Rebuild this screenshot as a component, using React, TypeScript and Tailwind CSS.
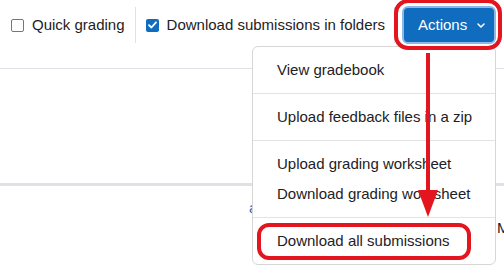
const menuGroups: string[][] = [
  ['View gradebook'],
  ['Upload feedback files in a zip'],
  ['Upload grading worksheet', 'Download grading worksheet'],
  ['Download all submissions'],
]

function Checkbox({ checked }: { checked?: boolean }) {
  if (checked) {
    return (
      <span className="flex h-[13px] w-[13px] items-center justify-center rounded-[2px] bg-[#0f6cbf]">
        <svg width="9" height="8" viewBox="0 0 9 8" fill="none">
          <path d="M1 4.2 3.4 6.5 8 1.3" stroke="white" strokeWidth="1.8" strokeLinecap="round" strokeLinejoin="round" />
        </svg>
      </span>
    )
  }
  return <span className="h-[13px] w-[13px] rounded-[2px] border border-[#767676] bg-white" />
}

export default function App() {
  return (
    <div className="relative h-[277px] w-[504px] overflow-hidden bg-white font-['Liberation_Sans',Arial,sans-serif] text-[15px] text-[#1d2125]">
      {/* top toolbar */}
      <div className="flex h-[50px] items-center pl-[11px]">
        <label className="flex items-center gap-[8px]">
          <Checkbox />
          <span>Quick grading</span>
        </label>
        <div className="ml-[10px] mr-[10px] h-[36px] w-px bg-[#dee2e6]" />
        <label className="flex items-center gap-[8px]">
          <Checkbox checked />
          <span>Download submissions in folders</span>
        </label>
        <div className="ml-[9px] mr-[7px] h-[36px] w-px bg-[#dee2e6]" />
        <button className="flex h-[38px] w-[94px] items-center rounded-[6px] border-2 border-[#8db8e6] bg-[#0f6cbf] pl-[14px] text-white">
          <span>Actions</span>
          <svg className="ml-[10px]" width="8" height="5" viewBox="0 0 8 5" fill="none">
            <path d="M1 1 4 4 7 1" stroke="white" strokeWidth="1.5" strokeLinecap="round" strokeLinejoin="round" />
          </svg>
        </button>
      </div>

      {/* table behind */}
      <div className="mt-[18px] h-px bg-[#dee2e6]" />
      <div className="h-[114px]" />
      <div className="h-[3px] bg-[#dee2e6]" />
      <div className="mt-[12px] h-[20px] pl-[249px] leading-[20px] text-[#0f6cbf]">a</div>
      <div className="h-[20px] pl-[497px] leading-[20px]">M</div>

      {/* actions dropdown menu */}
      <div className="absolute left-[252px] top-[46px] w-[244px] rounded-[6px] border border-[#d6d6d6] bg-white py-[8px]">
        {menuGroups.map((group, gi) => (
          <div key={gi}>
            {gi > 0 && <div className="my-[8px] h-px bg-[#e3e3e3]" />}
            {group.map(item => (
              <div key={item} className="flex h-[30px] items-center whitespace-nowrap pl-[24px]">
                {item}
              </div>
            ))}
          </div>
        ))}
      </div>

      {/* red annotations */}
      <div className="absolute left-[394px] top-[-1px] h-[51px] w-[108px] rounded-[14px] border-4 border-[#e3151f]" />
      <div className="absolute left-[257px] top-[223px] h-[37px] w-[214px] rounded-[12px] border-4 border-[#e3151f]" />
      <svg className="absolute left-0 top-0" width="504" height="277" viewBox="0 0 504 277">
        <line x1="428" y1="53" x2="428" y2="194" stroke="#e3151f" strokeWidth="4" />
        <polygon points="418,190 438,190 428,217" fill="#e3151f" />
      </svg>
    </div>
  )
}
